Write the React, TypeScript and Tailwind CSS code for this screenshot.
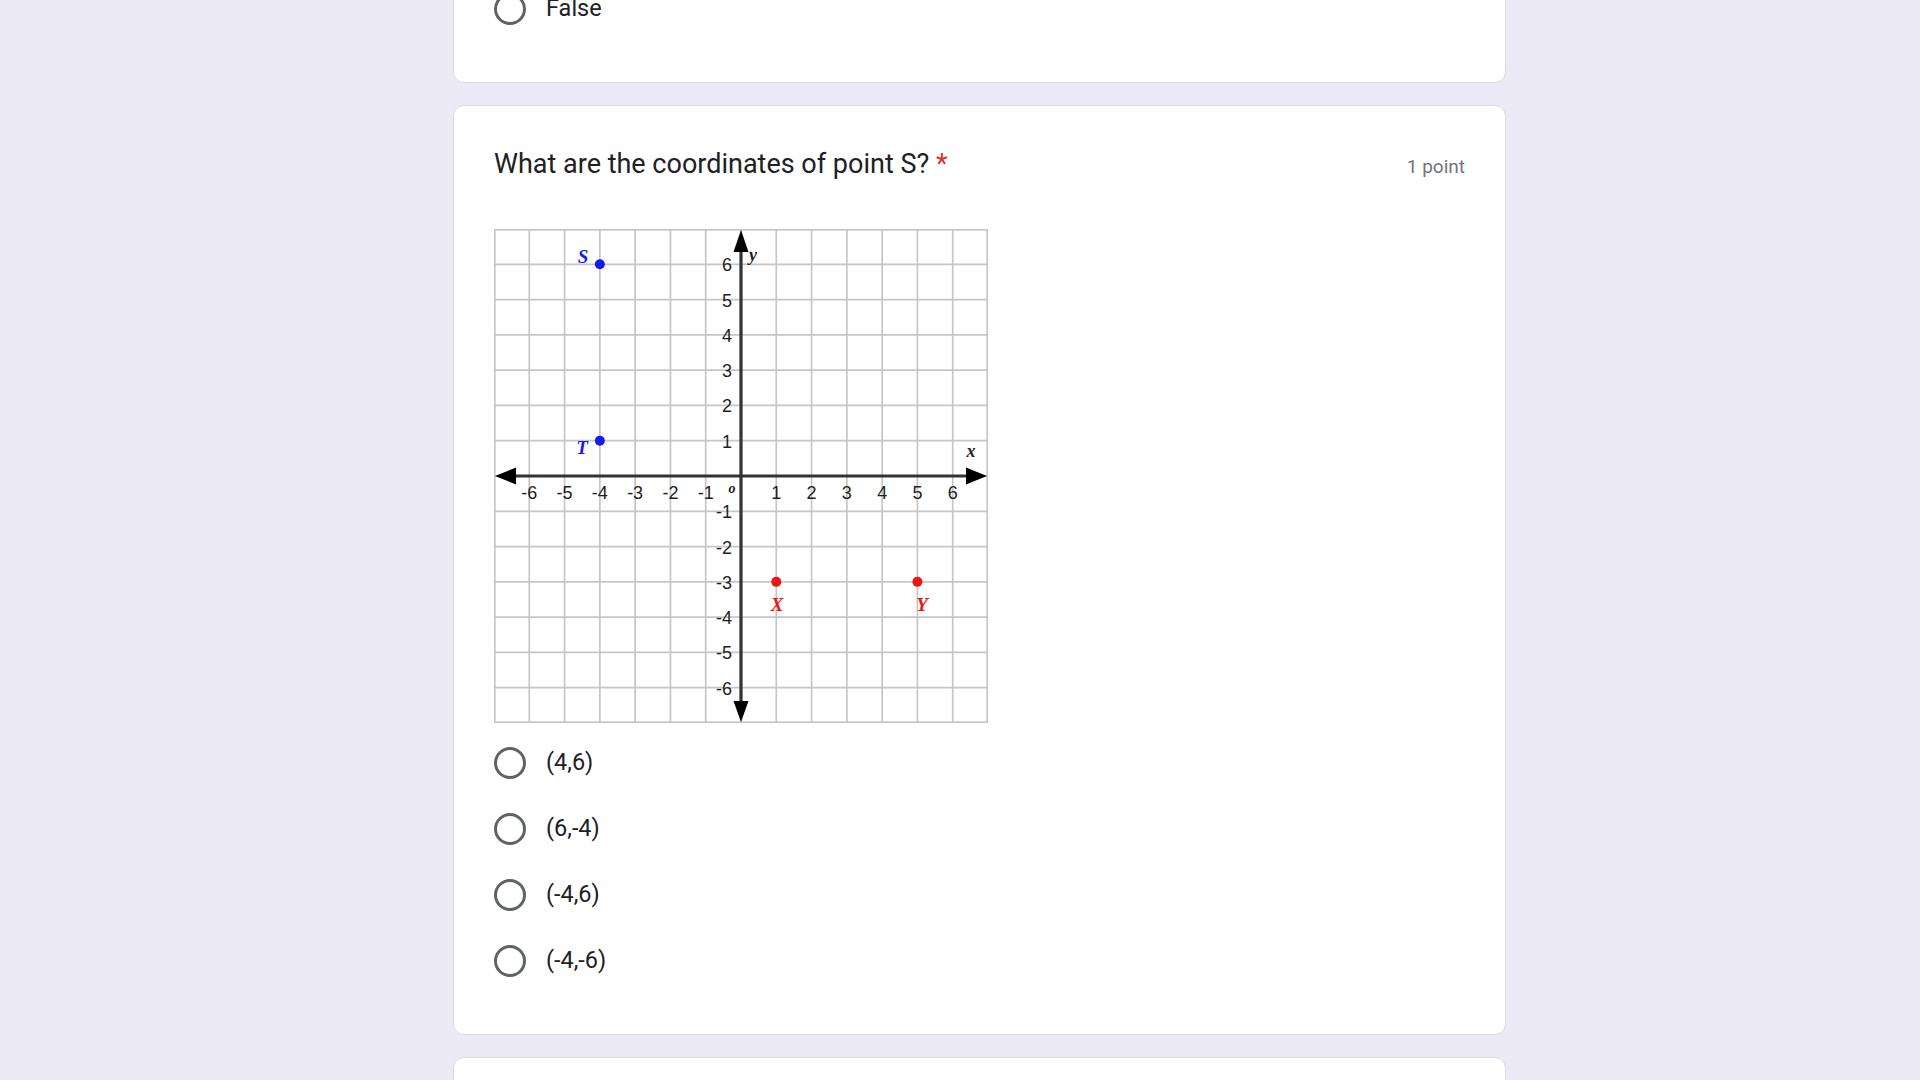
import React from "react";

const C = 494 / 14;
const O = 247;
const px = (g: number) => O + g * C;
const py = (g: number) => O - g * C;

function Radio({ label }: { label: string }) {
  return (
    <label className="flex h-[66px] items-center gap-5 cursor-pointer">
      <span className="h-8 w-8 shrink-0 rounded-full border-[3px] border-[#5f6368]" />
      <span className="text-[23.5px] text-[#202124] [font-family:Roboto,'Liberation_Sans',sans-serif]">{label}</span>
    </label>
  );
}

function Graph() {
  const ticks = [-6, -5, -4, -3, -2, -1, 1, 2, 3, 4, 5, 6];
  const lines = Array.from({ length: 15 }, (_, i) => i * C);
  return (
    <svg width="494" height="494" viewBox="0 0 494 494" className="block">
      <rect x="0" y="0" width="494" height="494" fill="#fff" />
      {lines.map((v, i) => (
        <g key={i}>
          <line x1={v} y1="0" x2={v} y2="494" stroke="#c6c6c6" strokeWidth="1.7" />
          <line x1="0" y1={v} x2="494" y2={v} stroke="#c6c6c6" strokeWidth="1.7" />
        </g>
      ))}
      <rect x="0.8" y="0.8" width="492.4" height="492.4" fill="none" stroke="#c6c6c6" strokeWidth="1.7" />

      {/* axes */}
      <line x1="18" y1={O} x2="476" y2={O} stroke="#333" strokeWidth="3.2" />
      <line x1={O} y1="18" x2={O} y2="476" stroke="#333" strokeWidth="3.2" />
      <polygon points={`1,${O} 22,${O - 8.5} 22,${O + 8.5}`} fill="#000" />
      <polygon points={`493,${O} 472,${O - 8.5} 472,${O + 8.5}`} fill="#000" />
      <polygon points={`${O},1 ${O - 7.5},23 ${O + 7.5},23`} fill="#000" />
      <polygon points={`${O},493 ${O - 7.5},472 ${O + 7.5},472`} fill="#000" />

      <g fontFamily="'Liberation Sans', Arial, sans-serif" fontSize="18" fill="#1e1e1e">
        {ticks.map((t) => (
          <text key={`x${t}`} x={px(t)} y={O + 17} textAnchor="middle" dominantBaseline="central">
            {t}
          </text>
        ))}
        {ticks.map((t) => (
          <text key={`y${t}`} x="238" y={py(t) + 1} textAnchor="end" dominantBaseline="central">
            {t}
          </text>
        ))}
      </g>

      <g fontFamily="'Liberation Serif', 'Times New Roman', serif" fontStyle="italic" fontWeight="bold">
        <text x="238" y="259" fontSize="14" fill="#222" textAnchor="middle" dominantBaseline="central">o</text>
        <text x="259" y="26" fontSize="18" fill="#222" textAnchor="middle" dominantBaseline="central">y</text>
        <text x="477" y="222" fontSize="18" fill="#222" textAnchor="middle" dominantBaseline="central">x</text>
        <text x="89" y="27" fontSize="19" fill="#1a1af0" textAnchor="middle" dominantBaseline="central">S</text>
        <text x="88" y="218" fontSize="19" fill="#1a1af0" textAnchor="middle" dominantBaseline="central">T</text>
        <text x="283" y="375" fontSize="19" fill="#e81818" textAnchor="middle" dominantBaseline="central">X</text>
        <text x="428" y="375" fontSize="19" fill="#e81818" textAnchor="middle" dominantBaseline="central">Y</text>
      </g>

      <circle cx={px(-4)} cy={py(6)} r="5" fill="#1a1af0" />
      <circle cx={px(-4)} cy={py(1)} r="5" fill="#1a1af0" />
      <circle cx={px(1)} cy={py(-3)} r="5" fill="#e81818" />
      <circle cx={px(5)} cy={py(-3)} r="5" fill="#e81818" />
    </svg>
  );
}

export default function App() {
  const options = ["(4,6)", "(6,-4)", "(-4,6)", "(-4,-6)"];

  return (
    <div className="h-[1080px] w-full overflow-hidden bg-[#edeaf7] [font-family:Roboto,'Liberation_Sans',sans-serif]">
      <div className="ml-[453px] flex w-[1053px] flex-col gap-[22px]">
        {/* previous question (tail) */}
        <div className="-mt-[40px] rounded-[11px] border border-[#dadce0] bg-white px-10 pt-[32px] pb-[57px]">
          <label className="flex h-8 items-center gap-5">
            <span className="h-8 w-8 shrink-0 rounded-full border-[3px] border-[#5f6368]" />
            <span className="text-[23.5px] text-[#202124]">False</span>
          </label>
        </div>

        {/* current question */}
        <div className="rounded-[11px] border border-[#dadce0] bg-white px-10 pt-10 pb-10">
          <div className="flex items-baseline justify-between">
            <h2 className="text-[27px] leading-[36px] text-[#202124]">
              What are the coordinates of point S? <span className="text-[#d93025]">*</span>
            </h2>
            <span className="text-[19px] text-[#70757a]">1 point</span>
          </div>

          <div className="mt-[47px]">
            <Graph />
          </div>

          <div className="mt-[7px] flex flex-col">
            {options.map((o) => (
              <Radio key={o} label={o} />
            ))}
          </div>
        </div>

        {/* next question (head) */}
        <div className="h-[80px] rounded-[11px] border border-[#dadce0] bg-white" />
      </div>
    </div>
  );
}
